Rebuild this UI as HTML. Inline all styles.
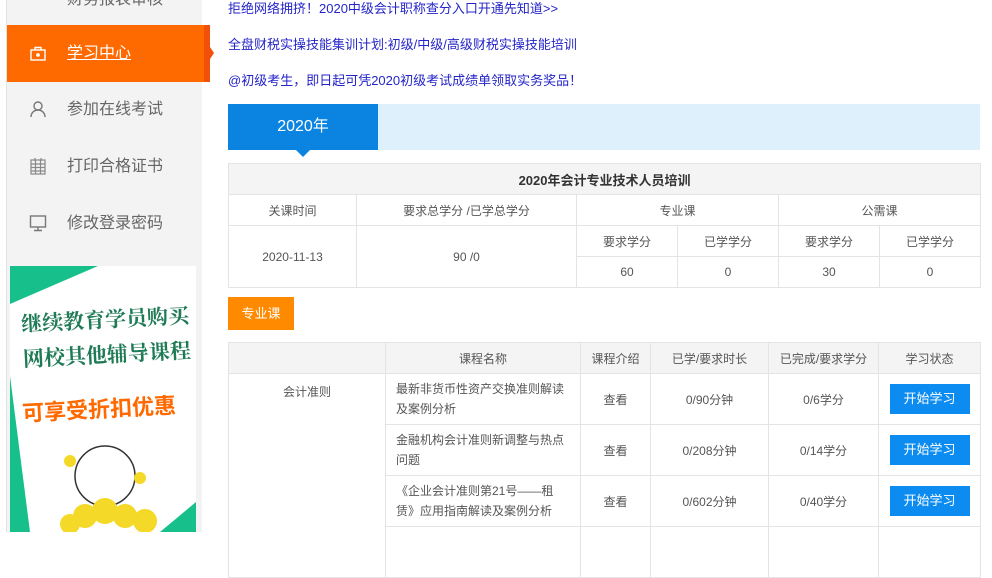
<!DOCTYPE html>
<html><head><meta charset="utf-8"><style>
*{margin:0;padding:0;box-sizing:border-box}
body{width:992px;height:532px;overflow:hidden;background:#fff;position:relative;font-family:"Liberation Sans","Noto Sans CJK SC",sans-serif;color:#555;font-size:12px}
.a{position:absolute}
.side{left:6px;top:0;width:196px;height:532px;background:#f3f3f3;border-left:1px solid #e3e3e3}
.nav{left:7px;width:195px;height:57px;font-size:16px;color:#666;line-height:57px;padding-left:60px}
.nav svg{position:absolute;left:22px;top:19px}
.link{left:228px;font-size:13px;color:#2424c8}
table{border-collapse:collapse;position:absolute;table-layout:fixed}
td{border:1px solid #e4e4e4;text-align:center;color:#555;font-size:12px}
.btn{display:inline-block;width:80px;height:30px;line-height:30px;background:#0c8cf0;color:#fff;font-size:13px}
</style></head><body>
<div class="a side"></div>
<div class="a nav" style="top:-29px">财务报表审核</div>
<div class="a" style="left:7px;top:25px;width:197px;height:57px;background:#ff6a00"></div>
<div class="a" style="left:204px;top:25px;width:6px;height:57px;background:#f0500a"></div>
<div class="a" style="left:210px;top:47px;width:0;height:0;border-top:6px solid transparent;border-bottom:6px solid transparent;border-left:4px solid #f0500a"></div>
<div class="a nav" style="top:25px;color:#fff;text-decoration:underline">学习中心
<svg width="18" height="18" viewBox="0 0 18 18" fill="none" stroke="#fff" stroke-width="1.4"><rect x="2" y="6" width="14" height="10"/><path d="M6 6V3.5h6V6"/><circle cx="9" cy="11" r="1.2" fill="#fff"/></svg></div>
<div class="a nav" style="top:81px">参加在线考试
<svg width="18" height="18" viewBox="0 0 18 18" fill="none" stroke="#777" stroke-width="1.4"><circle cx="9" cy="6" r="4"/><path d="M2 17c0-4 3-7 7-7s7 3 7 7"/></svg></div>
<div class="a nav" style="top:138px">打印合格证书
<svg width="18" height="18" viewBox="0 0 18 18" fill="none" stroke="#888" stroke-width="1.2"><rect x="2" y="3" width="14" height="14"/><path d="M2 7h14M2 10.5h14M2 14h14M6.5 3v14M11.5 3v14M6 1v3M12 1v3"/></svg></div>
<div class="a nav" style="top:195px">修改登录密码
<svg width="18" height="18" viewBox="0 0 18 18" fill="none" stroke="#777" stroke-width="1.4"><rect x="1.5" y="2" width="15" height="11"/><path d="M9 13v3M5 16.5h8"/></svg></div>
<div class="a" style="left:10px;top:266px;width:186px;height:266px;background:#fff;overflow:hidden">
<svg width="186" height="266" style="position:absolute;left:0;top:0"><polygon points="0,0 88,0 0,38" fill="#17c08a"/><polygon points="0,110 0,266 20,266" fill="#17c08a"/><polygon points="186,236 186,266 150,266" fill="#17c08a"/>
<circle cx="95" cy="210" r="30" fill="none" stroke="#333" stroke-width="1.5"/>
<g fill="#f5d928"><circle cx="75" cy="250" r="12"/><circle cx="95" cy="245" r="13"/><circle cx="115" cy="250" r="12"/><circle cx="135" cy="255" r="12"/><circle cx="60" cy="258" r="10"/><circle cx="60" cy="195" r="6"/><circle cx="130" cy="212" r="6"/></g></svg>
<div class="a" style="left:12px;top:36px;font-size:21px;font-weight:bold;color:#1f7a56;line-height:35px;font-family:'Noto Serif CJK SC',serif;transform:rotate(-3deg);white-space:nowrap">继续教育学员购买<br>网校其他辅导课程</div>
<div class="a" style="left:12px;top:126px;font-size:22px;font-weight:bold;color:#ff6a00;transform:rotate(-3deg);white-space:nowrap">可享受折扣优惠</div>
</div>
<div class="a link" style="top:-2px">拒绝网络拥挤！2020中级会计职称查分入口开通先知道&gt;&gt;</div>
<div class="a link" style="top:34px">全盘财税实操技能集训计划:初级/中级/高级财税实操技能培训</div>
<div class="a link" style="top:70px">@初级考生，即日起可凭2020初级考试成绩单领取实务奖品！</div>
<div class="a" style="left:228px;top:104px;width:752px;height:46px;background:#dff0fd"></div>
<div class="a" style="left:228px;top:104px;width:150px;height:46px;background:#0a84e0;color:#fff;font-size:16px;line-height:46px;text-align:center">2020年</div>
<div class="a" style="left:296px;top:150px;border-left:7px solid transparent;border-right:7px solid transparent;border-top:7px solid #0a84e0"></div>
<table style="left:228px;top:163px;width:752px">
<colgroup><col width="128"><col width="220"><col width="101"><col width="101"><col width="101"><col width="101"></colgroup>
<tr style="height:31px;background:#f4f4f4"><td colspan="6" style="font-weight:bold;font-size:13px;color:#333">2020年会计专业技术人员培训</td></tr>
<tr style="height:31px"><td>关课时间</td><td>要求总学分 /已学总学分</td><td colspan="2">专业课</td><td colspan="2">公需课</td></tr>
<tr style="height:31px"><td rowspan="2">2020-11-13</td><td rowspan="2">90 /0</td><td>要求学分</td><td>已学学分</td><td>要求学分</td><td>已学学分</td></tr>
<tr style="height:31px"><td>60</td><td>0</td><td>30</td><td>0</td></tr>
</table>
<div class="a" style="left:228px;top:297px;width:66px;height:33px;background:#ff8a00;color:#fff;font-size:13px;line-height:33px;text-align:center">专业课</div>
<table style="left:228px;top:342px;width:752px">
<colgroup><col width="157"><col width="195"><col width="70"><col width="118"><col width="110"><col width="102"></colgroup>
<tr style="height:31px;background:#f4f4f4"><td></td><td>课程名称</td><td>课程介绍</td><td>已学/要求时长</td><td>已完成/要求学分</td><td>学习状态</td></tr>
<tr style="height:51px"><td rowspan="4" style="vertical-align:top;padding-top:9px">会计准则</td><td style="text-align:left;padding:0 10px;line-height:20px">最新非货币性资产交换准则解读及案例分析</td><td>查看</td><td>0/90分钟</td><td>0/6学分</td><td><span class="btn">开始学习</span></td></tr>
<tr style="height:51px"><td style="text-align:left;padding:0 10px;line-height:20px">金融机构会计准则新调整与热点问题</td><td>查看</td><td>0/208分钟</td><td>0/14学分</td><td><span class="btn">开始学习</span></td></tr>
<tr style="height:51px"><td style="text-align:left;padding:0 10px;line-height:20px">《企业会计准则第21号——租赁》应用指南解读及案例分析</td><td>查看</td><td>0/602分钟</td><td>0/40学分</td><td><span class="btn">开始学习</span></td></tr>
<tr style="height:51px"><td></td><td></td><td></td><td></td><td></td></tr>
</table>
</body></html>
